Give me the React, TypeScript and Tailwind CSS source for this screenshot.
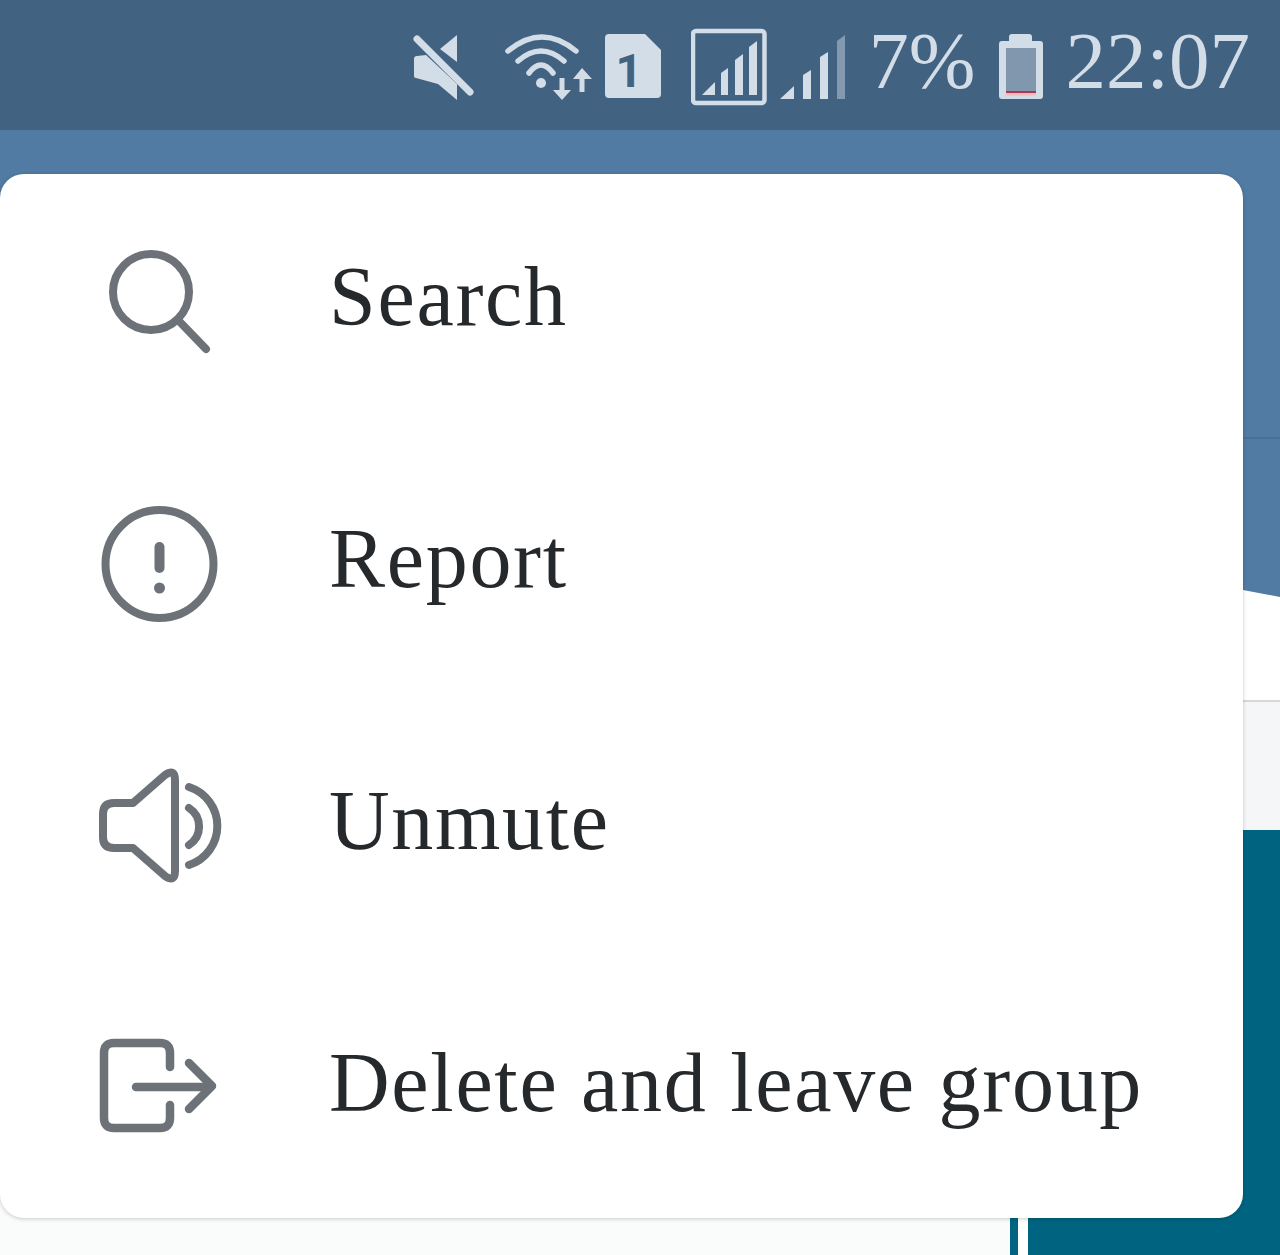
import React from 'react';

const LIGHT = '#d3dde8';
const BAR = '#426282';

const StatusIcons = {
    Mute: () => (
        <svg width="62" height="84" viewBox="412 25 62 84" className="block">
            <path d="M457 35 L457 62 L440 49 Z" fill={LIGHT} />
            <path d="M414 59 Q414 56 417 56 L426 55 L457 84 L457 100 L438 84 L416 78 Q414 78 414 76 Z" fill={LIGHT} />
            <path d="M417 39 L470 92" stroke={LIGHT} strokeWidth="7" strokeLinecap="round" />
        </svg>
    ),
    Wifi: () => (
        <svg width="87" height="84" viewBox="505 25 87 84" className="block">
            <g fill="none" stroke={LIGHT} strokeWidth="5.5" strokeLinecap="round">
                <path d="M508 51 Q542 23 576 51" />
                <path d="M518 61 Q541 41 564 61" />
                <path d="M529 73 Q541 57 553 73" />
            </g>
            <circle cx="541" cy="83" r="5" fill={LIGHT} />
            <path d="M562 78 V92" stroke={LIGHT} strokeWidth="5" />
            <path d="M553 90 H571 L562 100 Z" fill={LIGHT} />
            <path d="M582 78 V92" stroke={LIGHT} strokeWidth="5" />
            <path d="M573 79 H592 L582 68 Z" fill={LIGHT} />
        </svg>
    ),
    Sim: () => (
        <svg width="57" height="84" viewBox="605 25 57 84" className="block">
            <path d="M609 34 L645 34 L661 50 L661 94 Q661 98 657 98 L609 98 Q605 98 605 94 L605 38 Q605 34 609 34 Z" fill={LIGHT} />
            <text x="629" y="87" textAnchor="middle" fontSize="47" fontWeight="700" fontFamily="Roboto, sans-serif" fill={BAR}>1</text>
        </svg>
    ),
    SignalBox: () => (
        <svg width="76" height="84" viewBox="691 25 76 84" className="block">
            <rect x="693" y="31" width="71.500" height="72" rx="3" fill="none" stroke={LIGHT} strokeWidth="4.500" />
            <g fill={LIGHT}>
                <path d="M702 95 L715 82 L715 95 Z" />
                <path d="M721 73 L728 68 L728 95 L721 95 Z" />
                <path d="M735 60 L743 54 L743 95 L735 95 Z" />
                <path d="M749 47 L757 41 L757 95 L749 95 Z" />
            </g>
        </svg>
    ),
    Signal: () => (
        <svg width="65" height="84" viewBox="780 25 65 84" className="block">
            <g fill={LIGHT}>
                <path d="M780 99 L794 86 L794 99 Z" />
                <path d="M803 75 L811 70 L811 99 L803 99 Z" />
                <path d="M820 57 L828 52 L828 99 L820 99 Z" />
                <path d="M837 41 L845 35 L845 99 L837 99 Z" opacity="0.45" />
            </g>
        </svg>
    ),
    Battery: () => (
        <svg width="45" height="84" viewBox="1000 25 45 84" className="block">
            <path d="M1013 34 H1030 Q1033 34 1033 37 V41 H1041 Q1044 41 1044 44 V96 Q1044 99 1041 99 H1003 Q1000 99 1000 96 V44 Q1000 41 1003 41 H1010 V37 Q1010 34 1013 34 Z" fill={LIGHT} />
            <rect x="1007" y="48" width="30" height="43" fill="#8097ad" />
            <rect x="1007" y="91" width="30" height="2.200" fill="#a83a52" />
            <rect x="1007" y="93.200" width="30" height="2.300" fill="#f0b9c0" />
        </svg>
    ),
};

const MenuIcons = {
    Search: () => (
        <svg width="130" height="130" viewBox="95 233 130 130" className="block shrink-0" fill="none" stroke="#6d7278" strokeWidth="8" strokeLinecap="round">
            <circle cx="151" cy="292" r="38" />
            <path d="M178 320 L206 349" />
        </svg>
    ),
    Report: () => (
        <svg width="130" height="130" viewBox="95 495 130 130" className="block shrink-0" fill="none" stroke="#6d7278" strokeWidth="8" strokeLinecap="round">
            <circle cx="159.500" cy="564" r="54" />
            <path d="M159.500 547 V568" strokeWidth="10" />
            <circle cx="159.500" cy="588" r="5.500" fill="#6d7278" stroke="none" />
        </svg>
    ),
    Unmute: () => (
        <svg width="130" height="130" viewBox="95 757 130 130" className="block shrink-0" fill="none" stroke="#6d7278" strokeWidth="8" strokeLinecap="round" strokeLinejoin="round">
            <path d="M133 803 L114 803 Q103 803 103 814 L103 837 Q103 848 114 848 L133 848 L165 876 Q175 883 175 871 L175 780 Q175 768 165 775 Z" />
            <path d="M189 808 A22 22 0 0 1 189 845" />
            <path d="M189 787 A41 41 0 0 1 189 865" />
        </svg>
    ),
    Leave: () => (
        <svg width="130" height="130" viewBox="95 1019 130 130" className="block shrink-0" fill="none" stroke="#6d7278" strokeWidth="8.500" strokeLinecap="round" strokeLinejoin="round">
            <path d="M170 1067 L170 1053 Q170 1043 160 1043 L114 1043 Q104 1043 104 1053 L104 1118 Q104 1128 114 1128 L160 1128 Q170 1128 170 1118 L170 1105" />
            <path d="M136 1087 L210 1087" />
            <path d="M189 1063 L212 1086 L189 1109" />
        </svg>
    ),
};

const MENU_ITEMS = [
    { label: 'Search', Icon: MenuIcons.Search },
    { label: 'Report', Icon: MenuIcons.Report },
    { label: 'Unmute', Icon: MenuIcons.Unmute },
    { label: 'Delete and leave group', Icon: MenuIcons.Leave },
];

const App: React.FC = () => {
    return (
        <div className="relative w-[1280px] h-[1255px] overflow-hidden bg-white font-['Liberation_Serif',serif]">
            {/* Status bar */}
            <div className="flex h-[130px] justify-end items-start pt-[25px] pr-[30px] bg-[#426282] text-[#d3dde8]">
                <StatusIcons.Mute />
                <div className="ml-[31px]"><StatusIcons.Wifi /></div>
                <div className="ml-[13px]"><StatusIcons.Sim /></div>
                <div className="ml-[29px]"><StatusIcons.SignalBox /></div>
                <div className="ml-[13px]"><StatusIcons.Signal /></div>
                <span className="ml-[24px] text-[80px] leading-[72px]">7%</span>
                <div className="ml-[24px]"><StatusIcons.Battery /></div>
                <span className="ml-[21px] text-[81px] leading-[72px]">22:07</span>
            </div>

            {/* Page behind the menu */}
            <div className="h-[307px] bg-[#517ba3]" />
            <div className="h-[153px] border-t-2 border-[#4a7096] bg-[#517ba3]" />
            <svg width="1280" height="20" viewBox="0 0 1280 20" className="block bg-[#517ba3]">
                <path d="M0 0 L1243 0 L1280 7 L1280 20 L0 20 Z" fill="#ffffff" />
            </svg>
            <div className="h-[90px] bg-white" />
            <div className="h-[130px] border-t-2 border-[#d9d7d8] bg-[#f4f6f8]" />
            <div className="flex h-[425px]">
                <div className="w-[1010px] bg-[#fafbfb]" />
                <div className="w-[8px] bg-[#006480]" />
                <div className="w-[10px] bg-white" />
                <div className="flex-1 bg-[#006480]" />
            </div>

            {/* Popup menu */}
            <div className="absolute left-0 top-[174px] flex w-[1243px] h-[1044px] flex-col gap-[14px] rounded-[24px] bg-white shadow-[0_1px_4px_rgba(0,0,0,0.2)]">
                {MENU_ITEMS.map(({ label, Icon }) => (
                    <div key={label} className="flex h-[248px] items-center pl-[95px]">
                        <Icon />
                        <span className="ml-[104px] mb-[3px] text-[84px] leading-none tracking-[1.7px] text-[#26292c]">{label}</span>
                    </div>
                ))}
            </div>
        </div>
    );
};

export default App;
